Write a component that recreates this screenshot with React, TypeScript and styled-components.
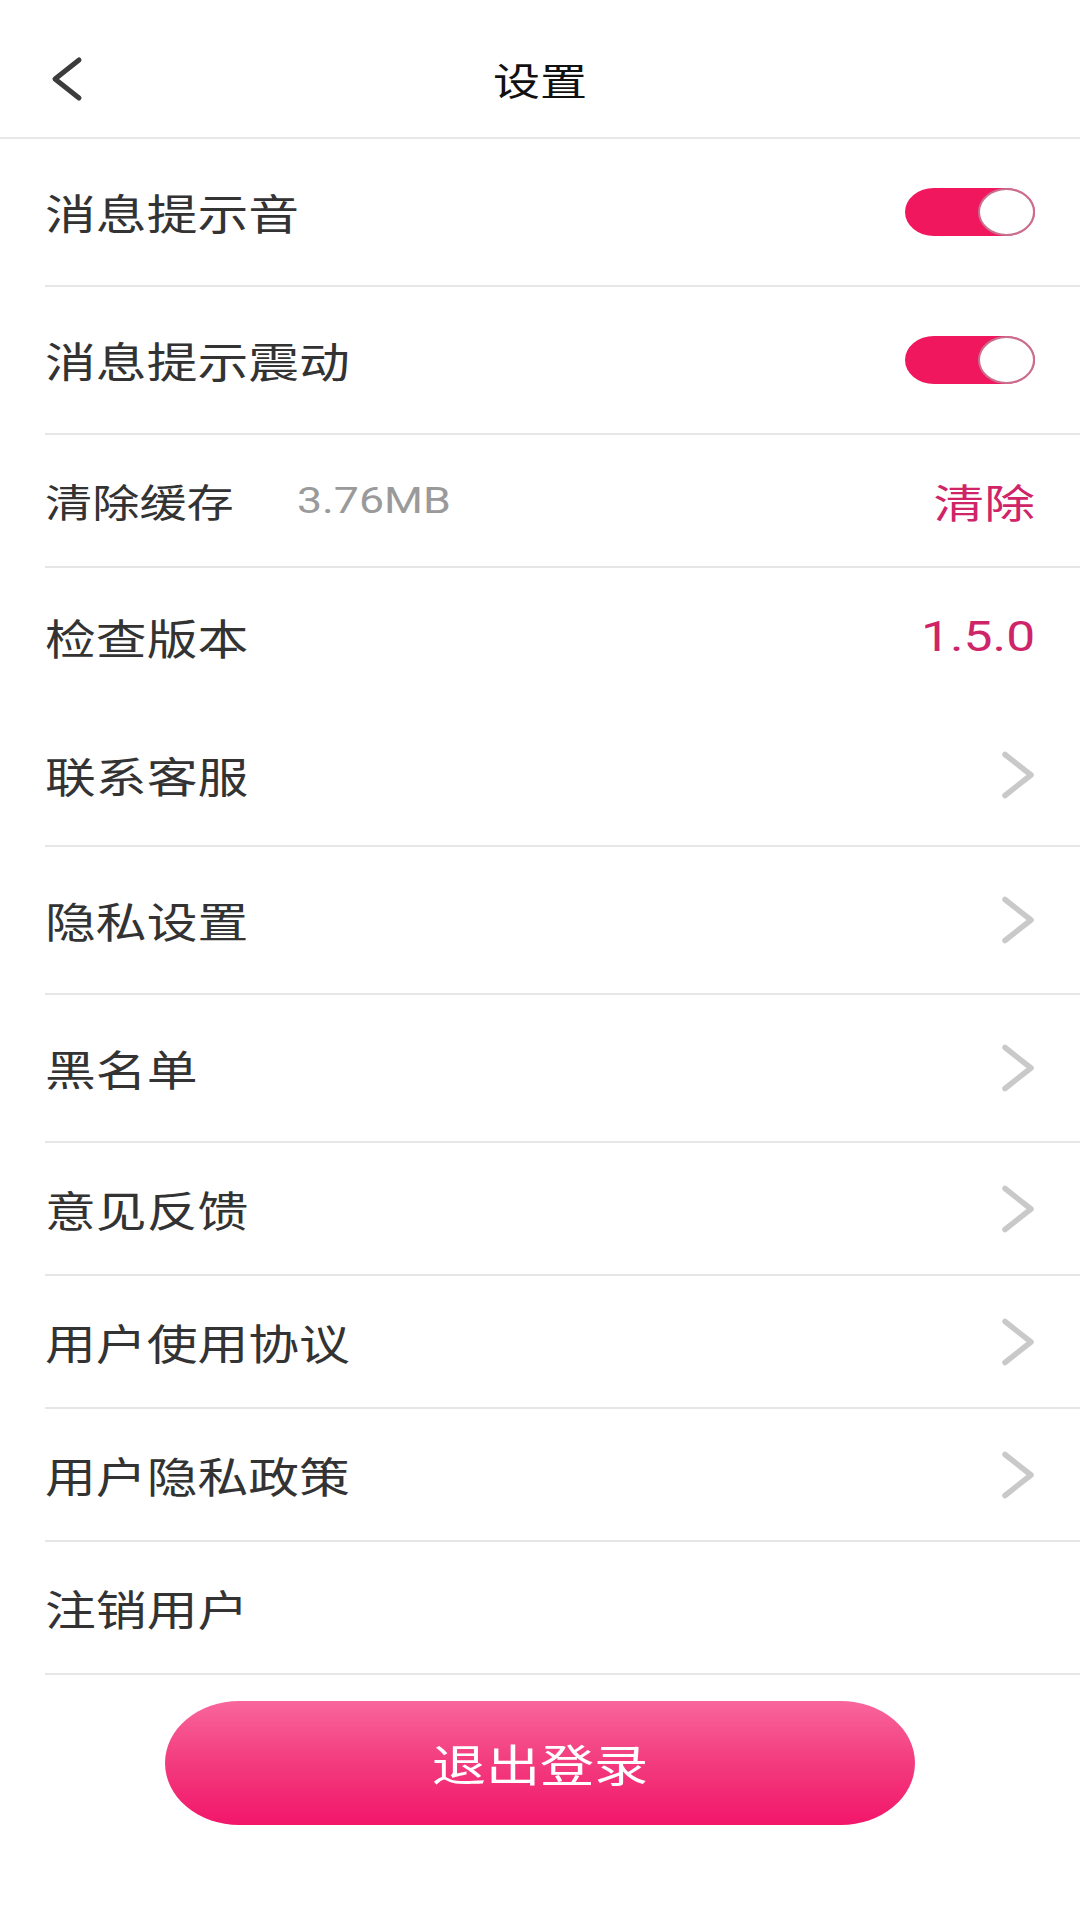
import React from "react";
import styled, { createGlobalStyle } from "styled-components";

const GlobalStyle = createGlobalStyle`
  html, body {
    margin: 0;
    padding: 0;
    background: #ffffff;
  }
  body {
    font-family: "Noto Sans CJK SC", "Noto Sans", Roboto, sans-serif;
  }
  * { box-sizing: border-box; }
`;

const STRETCH = 1.21;

const Page = styled.div`
  width: 1080px;
  min-height: 1920px;
  background: #ffffff;
  display: flex;
  flex-direction: column;
`;

const Header = styled.header`
  height: 139px;
  padding-top: 20px;
  border-bottom: 2px solid #e8e8e8;
  display: grid;
  grid-template-columns: 1fr auto 1fr;
  align-items: center;
`;

const BackButton = styled.button`
  justify-self: start;
  margin-left: 50px;
  padding: 0;
  border: none;
  background: transparent;
  display: flex;
  align-items: center;
  cursor: pointer;
`;

const Title = styled.h1`
  margin: 0;
  font-size: 38px;
  font-weight: 400;
  color: #111111;
  line-height: 1;
  transform: scaleX(1.24);
  transform-origin: center center;
`;

const List = styled.div`
  padding-left: 45px;
  display: flex;
  flex-direction: column;
`;

const Row = styled.div<{ $h: number; $divider?: boolean }>`
  height: ${(p) => p.$h}px;
  padding-right: 45px;
  display: flex;
  align-items: center;
  justify-content: space-between;
  border-bottom: ${(p) => (p.$divider === false ? "none" : "2px solid #e6e6e6")};
`;

const LeftGroup = styled.div`
  display: flex;
  align-items: center;
`;

const Label = styled.span<{ $size?: number }>`
  display: inline-block;
  font-size: ${(p) => p.$size ?? 42}px;
  color: #333333;
  line-height: 1;
  transform: scaleX(${STRETCH});
  transform-origin: left center;
`;

const Meta = styled.span`
  display: inline-block;
  margin-left: 96px;
  font-family: Roboto, "Noto Sans", sans-serif;
  font-size: 36px;
  color: #9a9a9a;
  line-height: 1;
  transform: scaleX(1.24);
  transform-origin: left center;
`;

const Value = styled.span<{ $latin?: boolean }>`
  display: inline-block;
  font-family: ${(p) =>
    p.$latin ? 'Roboto, "Noto Sans", sans-serif' : '"Noto Sans CJK SC", sans-serif'};
  font-size: ${(p) => (p.$latin ? 43 : 40)}px;
  color: #d02468;
  line-height: 1;
  transform: scaleX(${(p) => (p.$latin ? 1.2 : 1.27)});
  transform-origin: right center;
`;

const Track = styled.div`
  width: 130px;
  height: 48px;
  border-radius: 29px / 24px;
  background: #f0175f;
  display: flex;
  justify-content: flex-end;
  align-items: center;
`;

const Knob = styled.div`
  width: 57px;
  height: 48px;
  border-radius: 50%;
  background: #ffffff;
  border: 2px solid #c9708f;
`;

const ButtonWrap = styled.div`
  display: flex;
  justify-content: center;
  padding-top: 26px;
`;

const LogoutButton = styled.button`
  width: 750px;
  height: 124px;
  border: none;
  border-radius: 74px / 62px;
  background: linear-gradient(180deg, #f9669b 0%, #f33f80 45%, #f2166a 100%);
  display: flex;
  align-items: center;
  justify-content: center;
  cursor: pointer;
`;

const ButtonText = styled.span`
  display: inline-block;
  font-family: "Noto Sans CJK SC", sans-serif;
  font-size: 44px;
  color: #ffffff;
  line-height: 1;
  transform: scaleX(1.23);
`;

const BackIcon = () => (
  <svg width="34" height="46" viewBox="0 0 34 46">
    <path
      d="M29 4 L5 23 L29 42"
      fill="none"
      stroke="#3c3c3c"
      strokeWidth="5"
      strokeLinecap="round"
      strokeLinejoin="round"
    />
  </svg>
);

const ChevronIcon = () => (
  <svg width="34" height="48" viewBox="0 0 34 48">
    <path
      d="M4 3.5 L30 24 L4 44.5"
      fill="none"
      stroke="#c9c9c9"
      strokeWidth="5.5"
      strokeLinecap="round"
      strokeLinejoin="round"
    />
  </svg>
);

const Toggle = () => (
  <Track>
    <Knob />
  </Track>
);

type Item = {
  label: string;
  h: number;
  size?: number;
  divider?: boolean;
  kind: "toggle" | "link" | "none" | "clear" | "version";
};

const items: Item[] = [
  { label: "消息提示音", h: 148, kind: "toggle" },
  { label: "消息提示震动", h: 148, kind: "toggle" },
  { label: "清除缓存", h: 133, kind: "clear", size: 39 },
  { label: "检查版本", h: 137, kind: "version", divider: false },
  { label: "联系客服", h: 142, kind: "link" },
  { label: "隐私设置", h: 148, kind: "link" },
  { label: "黑名单", h: 148, kind: "link" },
  { label: "意见反馈", h: 133, kind: "link" },
  { label: "用户使用协议", h: 133, kind: "link" },
  { label: "用户隐私政策", h: 133, kind: "link" },
  { label: "注销用户", h: 133, kind: "none" },
];

const renderRight = (kind: Item["kind"]) => {
  switch (kind) {
    case "toggle":
      return <Toggle />;
    case "link":
      return <ChevronIcon />;
    case "clear":
      return <Value>清除</Value>;
    case "version":
      return <Value $latin>1.5.0</Value>;
    default:
      return null;
  }
};

export default function App() {
  return (
    <Page>
      <GlobalStyle />
      <Header>
        <BackButton aria-label="返回">
          <BackIcon />
        </BackButton>
        <Title>设置</Title>
        <div />
      </Header>
      <List>
        {items.map((it) => (
          <Row key={it.label} $h={it.h} $divider={it.divider}>
            <LeftGroup>
              <Label $size={it.size}>{it.label}</Label>
              {it.kind === "clear" && <Meta>3.76MB</Meta>}
            </LeftGroup>
            {renderRight(it.kind)}
          </Row>
        ))}
      </List>
      <ButtonWrap>
        <LogoutButton>
          <ButtonText>退出登录</ButtonText>
        </LogoutButton>
      </ButtonWrap>
    </Page>
  );
}
